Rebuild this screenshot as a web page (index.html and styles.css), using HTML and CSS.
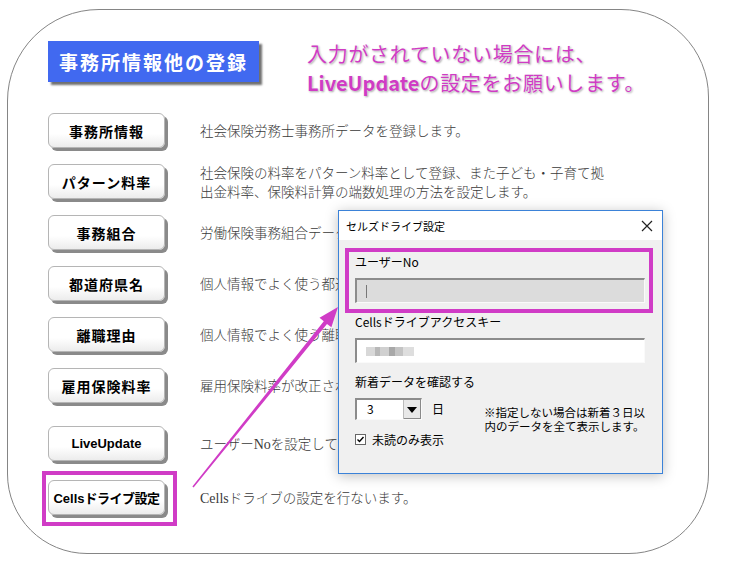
FILE: index.html
```html
<!DOCTYPE html>
<html lang="ja">
<head>
    <meta charset="UTF-8">
    <meta name="viewport" content="width=device-width, initial-scale=1.0">
    <title>事務所情報他の登録</title>
    <link rel="stylesheet" href="styles.css">
</head>
<body>
    <div class="frame">
        <header class="top">
            <h1 class="title">事務所情報他の登録</h1>
            <p class="notice">入力がされていない場合には、<br><b>LiveUpdate</b>の設定をお願いします。</p>
        </header>

        <ul class="menu">
            <li class="row">
                <button class="btn">事務所情報</button>
                <span class="desc">社会保険労務士事務所データを登録します。</span>
            </li>
            <li class="row">
                <button class="btn">パターン料率</button>
                <span class="desc">社会保険の料率をパターン料率として登録、また子ども・子育て拠<br>出金料率、保険料計算の端数処理の方法を設定します。</span>
            </li>
            <li class="row">
                <button class="btn">事務組合</button>
                <span class="desc covered">労働保険事務組合データを登録します。</span>
            </li>
            <li class="row">
                <button class="btn">都道府県名</button>
                <span class="desc covered">個人情報でよく使う都道府県名を登録します。</span>
            </li>
            <li class="row">
                <button class="btn">離職理由</button>
                <span class="desc covered">個人情報でよく使う離職理由を登録します。</span>
            </li>
            <li class="row">
                <button class="btn">雇用保険料率</button>
                <span class="desc covered">雇用保険料率が改正された場合に設定します。</span>
            </li>
            <li class="row row-live">
                <button class="btn btn-latin">LiveUpdate</button>
                <span class="desc covered">ユーザー<span class="latin">No</span>を設定してください。</span>
            </li>
            <li class="row row-cells">
                <button class="btn btn-marked"><span class="latin-bold">Cells</span>ドライブ設定</button>
                <span class="desc"><span class="latin">Cells</span>ドライブの設定を行ないます。</span>
            </li>
        </ul>

        <div class="dialog">
            <div class="dialog-title">
                <span>セルズドライブ設定</span>
                <svg class="close" width="12" height="12" viewBox="0 0 12 12"><path d="M1 1L11 11M11 1L1 11" stroke="#222" stroke-width="1.2"/></svg>
            </div>
            <div class="dialog-body">
                <div class="mark-box"></div>
                <div class="field-label first">ユーザーNo</div>
                <div class="text-box disabled"><span class="caret"></span></div>
                <div class="field-label">Cellsドライブアクセスキー</div>
                <div class="text-box"><span class="blur"></span></div>
                <div class="field-label">新着データを確認する</div>
                <div class="days-row">
                    <div class="select">
                        <span class="select-value">3</span>
                        <span class="select-btn"><svg width="10" height="6" viewBox="0 0 10 6"><path d="M0 0H10L5 6Z" fill="#000"/></svg></span>
                    </div>
                    <span class="unit">日</span>
                    <p class="days-note">※指定しない場合は新着３日以<br>内のデータを全て表示します。</p>
                </div>
                <label class="check-row">
                    <span class="check"><svg width="9" height="9" viewBox="0 0 9 9"><path d="M1.5 4.5L3.5 6.5L7.5 2" fill="none" stroke="#000" stroke-width="1.4"/></svg></span>
                    未読のみ表示
                </label>
            </div>
        </div>
    </div>

    <svg class="arrow" width="731" height="569" viewBox="0 0 731 569">
        <polygon points="192.4,486.5 323.8,321.3 319.5,317.8 338,307 331.4,327.2 327,323.9 193.6,487.5" fill="#d03cc6"/>
    </svg>
</body>
</html>
```

FILE: styles.css
```css
body {
    margin: 0;
    background: #fff;
    font-family: "Noto Sans CJK JP", sans-serif;
    position: relative;
    width: 731px;
    height: 569px;
    overflow: hidden;
}
.frame {
    box-sizing: border-box;
    margin: 9px 0 0 7px;
    width: 702px;
    height: 545px;
    border: 1px solid #858585;
    border-radius: 92px 88px 80px 80px;
    padding: 31px 0 0 40px;
    position: relative;
}
.top {
    display: flex;
    align-items: flex-start;
    height: 64px;
}
.title {
    margin: 0;
    width: 211px;
    height: 41px;
    background: #4169f0;
    box-shadow: 3px 3px 2px #707070;
    color: #fff;
    font-size: 19px;
    font-weight: bold;
    letter-spacing: 2px;
    line-height: 41px;
    text-align: center;
}
.notice {
    margin: -2px 0 0 48px;
    color: #cf3cc4;
    font-size: 20px;
    line-height: 29px;
    letter-spacing: 0.7px;
    text-shadow: 0 0 2px #fff, 1px 1px 2px #9a9a9a;
}
.notice b {
    font-weight: bold;
    letter-spacing: 0;
}
.menu {
    list-style: none;
    margin: 0;
    padding: 0;
}
.row {
    display: flex;
    align-items: center;
    height: 51px;
}
.row-live {
    margin-top: 7px;
}
.row-cells {
    margin-top: 3px;
}
.btn {
    position: relative;
    flex: none;
    width: 117px;
    height: 35px;
    padding: 0;
    background: linear-gradient(#fff, #fff 60%, #ececec);
    border: 1px solid #b5b5b5;
    border-radius: 6px;
    box-shadow: 3px 3px 0 #8a8a8a;
    font-family: "Noto Sans CJK JP", sans-serif;
    font-size: 14px;
    font-weight: bold;
    letter-spacing: 1px;
    white-space: nowrap;
    color: #000;
}
.btn-latin {
    font-family: "Liberation Sans", sans-serif;
    font-size: 13px;
    letter-spacing: 0;
}
.btn-marked {
    font-size: 13px;
    letter-spacing: -0.5px;
}
.latin-bold {
    font-family: "Liberation Sans", sans-serif;
    letter-spacing: 0;
}
.btn-marked::after {
    content: "";
    position: absolute;
    left: -7px;
    top: -10px;
    right: -13px;
    bottom: -12px;
    border: 4px solid #d03cc6;
}
.desc {
    margin-left: 35px;
    color: #3a3a3a;
    font-size: 13.5px;
    font-weight: 300;
    line-height: 19px;
}
.desc.covered {
    max-width: 138px;
    white-space: nowrap;
    overflow: hidden;
}
.latin {
    font-family: "Liberation Serif", serif;
    font-size: 14px;
}
.dialog {
    position: absolute;
    left: 330px;
    top: 200px;
    width: 325px;
    height: 264px;
    box-sizing: border-box;
    border: 1px solid #3b82d8;
    background: #f0f0f0;
    box-shadow: 0 2px 12px rgba(0, 0, 0, 0.25);
    font-size: 12px;
    color: #000;
    z-index: 2;
}
.dialog-title {
    display: flex;
    align-items: center;
    justify-content: space-between;
    height: 29px;
    padding: 0 9px 0 7px;
    background: #fff;
    font-size: 11px;
}
.close {
    display: block;
}
.dialog-body {
    position: relative;
    padding: 14px 17px 0 16px;
}
.mark-box {
    position: absolute;
    left: 6px;
    top: 8px;
    width: 308px;
    height: 65px;
    box-sizing: border-box;
    border: 4px solid #d03cc6;
}
.field-label {
    line-height: 16px;
    margin-top: 11px;
}
.field-label.first {
    margin-top: 0;
}
.text-box {
    margin-top: 8px;
    height: 25px;
    box-sizing: border-box;
    background: #fff;
    border-top: 2px solid #8c8c8c;
    border-left: 2px solid #8c8c8c;
    border-right: 1px solid #fafafa;
    border-bottom: 1px solid #fafafa;
    display: flex;
    align-items: center;
}
.text-box.disabled {
    background: #dcdcdc;
}
.caret {
    width: 1px;
    height: 13px;
    margin-left: 9px;
    background: #777;
}
.blur {
    width: 48px;
    height: 9px;
    margin-left: 9px;
    background: linear-gradient(90deg, #d8d8d8 0 18%, #b8b8b8 18% 30%, #d0d0d0 30% 48%, #a8a8a8 48% 60%, #c4c4c4 60% 78%, #dedede 78%);
}
.days-row {
    display: flex;
    align-items: flex-start;
    margin-top: 8px;
    height: 35px;
}
.select {
    display: flex;
    width: 73px;
    height: 22px;
    box-sizing: border-box;
    background: #fff;
    border-top: 2px solid #8c8c8c;
    border-left: 2px solid #8c8c8c;
    border-right: 1px solid #fafafa;
    border-bottom: 1px solid #fafafa;
}
.select-value {
    flex: 1;
    padding-left: 10px;
    line-height: 17px;
}
.select-btn {
    width: 17px;
    display: flex;
    align-items: center;
    justify-content: center;
    background: #e8e8e8;
    border-left: 1px solid #bbb;
    box-shadow: inset -1px -1px 0 #8a8a8a;
}
.unit {
    margin-left: 10px;
    line-height: 22px;
}
.days-note {
    margin: 7px 0 0 40px;
    width: 172px;
    font-size: 11.5px;
    line-height: 14px;
    text-align: center;
    white-space: nowrap;
}
.check-row {
    display: flex;
    align-items: center;
    gap: 6px;
    height: 12px;
    margin-top: 0;
}
.check {
    display: flex;
    align-items: center;
    justify-content: center;
    width: 11px;
    height: 11px;
    box-sizing: border-box;
    background: #fff;
    border: 1px solid #666;
}
.arrow {
    position: absolute;
    left: 0;
    top: 0;
    pointer-events: none;
    z-index: 3;
}
```
